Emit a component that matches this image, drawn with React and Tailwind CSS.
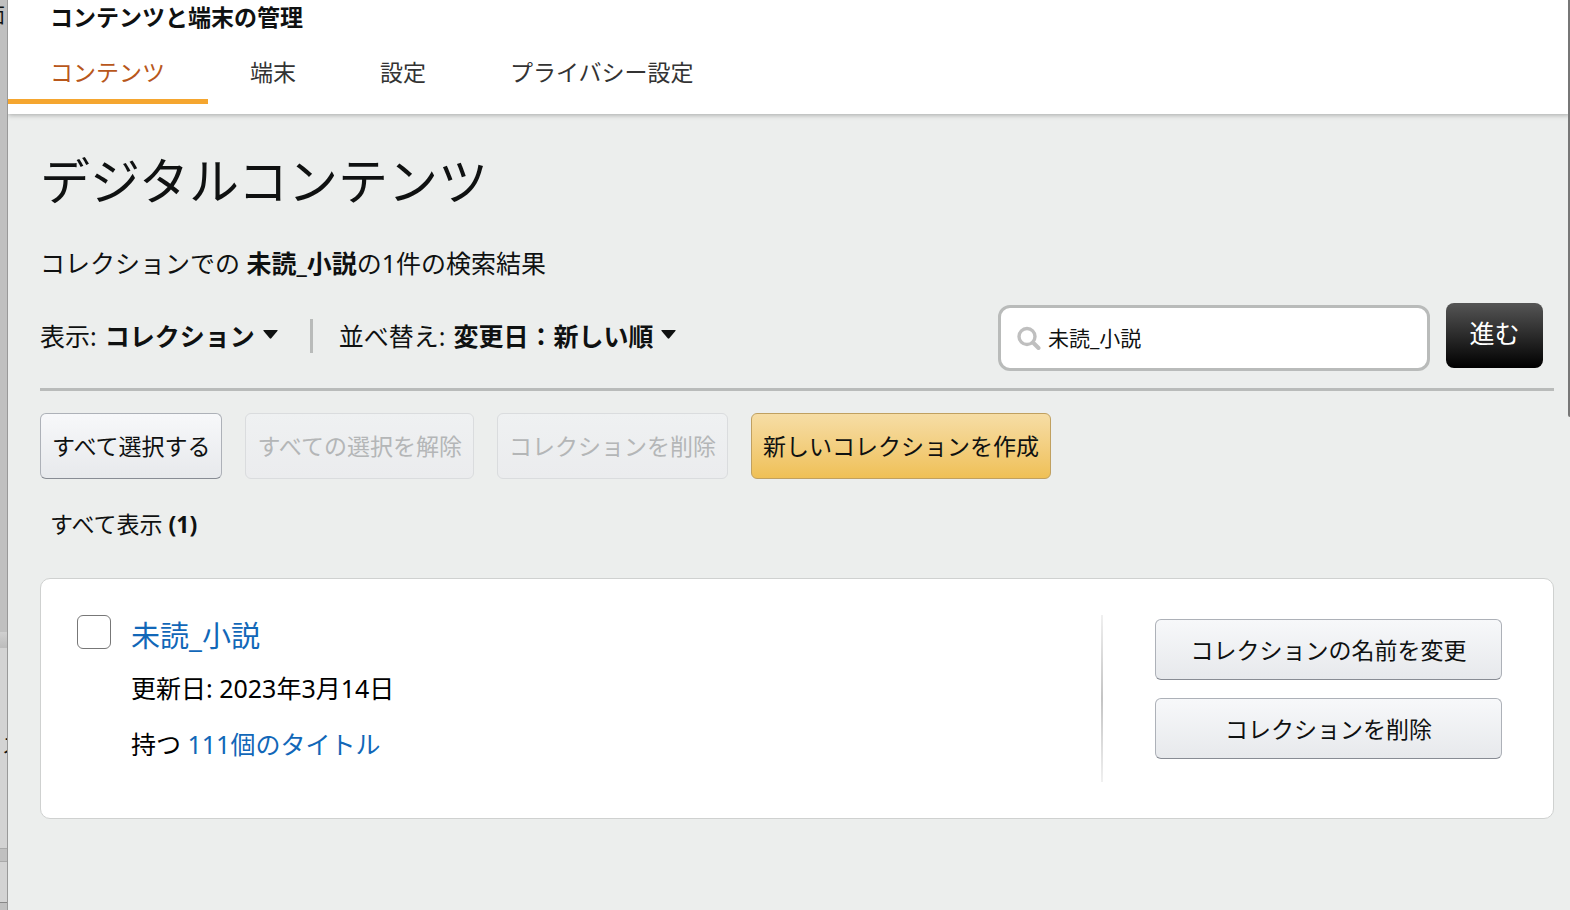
import React, { useState } from 'react';

const TABS = ['コンテンツ', '端末', '設定', 'プライバシー設定'];

const Caret = () => (
  <svg className="pointer-events-none h-[9px] w-[15px] flex-shrink-0" viewBox="0 0 15 9" aria-hidden="true">
    <path d="M1 0h13q1.2 0 .4 1L8.3 8.2q-.8.9-1.6 0L.6 1Q-.2 0 1 0z" fill="#0f1111" />
  </svg>
);

const SearchIcon = () => (
  <svg className="h-6 w-6 flex-shrink-0" viewBox="0 0 24 24" fill="none" stroke="#bfbfbf" aria-hidden="true">
    <circle cx="10" cy="10.5" r="8" strokeWidth="3.4" />
    <path d="M16.5 17l5 5" strokeWidth="4" strokeLinecap="round" />
  </svg>
);

const FilterSelect = ({ id, label, options }) => (
  <div className="flex items-center">
    <label htmlFor={id} className="mr-2">{label}</label>
    <select id={id} className="field-sizing-content appearance-none bg-transparent p-0 font-bold">
      {options.map((option) => (
        <option key={option}>{option}</option>
      ))}
    </select>
    <span className="ml-2 flex pb-[2px]">
      <Caret />
    </span>
  </div>
);

const GreyButton = ({ children, className = '', disabled = false }) => (
  <button
    className={`rounded-md border border-[#adb1b8] border-b-[#888c94] bg-linear-to-b from-[#f7f8fa] to-[#e7e9ec] text-[23px] leading-8 disabled:border-[#dadcde] disabled:from-[#eff1f2] disabled:to-[#ebecee] disabled:text-[#b4b6b7] ${className}`}
    disabled={disabled}
  >
    {children}
  </button>
);

// Slice of the page that sits behind the panel
const Backdrop = () => (
  <div className="relative flex w-2 flex-shrink-0 flex-col overflow-hidden border-r border-[#999] bg-[#c0c0c0] text-xl" aria-hidden="true">
    <div className="h-[632px]" />
    <div className="h-4 bg-linear-to-b from-[#d0d0d0] to-[#bcbcbc]" />
    <div className="h-[201px] border-b border-[#aaa] bg-[#d3d3d3]" />
    <div className="h-[13px] border-b border-[#aaa]" />
    <div className="h-[41px] border-b border-[#888] bg-[#d3d3d3]" />
    <span className="absolute top-0 right-[2px] leading-8">面</span>
    <span className="absolute top-[730px] left-[2px] leading-8">ス</span>
  </div>
);

const App = () => {
  const [query, setQuery] = useState('未読_小説');
  const [checked, setChecked] = useState(false);

  return (
    <div className="relative flex min-h-screen bg-[#eceeed] font-['Noto_Sans','Noto_Sans_CJK_JP',sans-serif] text-[#0f1111]" lang="ja">
      <Backdrop />

      <div className="min-w-0 flex-1">
        <header className="bg-white pb-[10px] shadow-[0_1px_5px_rgba(0,0,0,0.3)]">
          <h1 className="pt-px pl-[42px] text-[23px] leading-8 font-bold">コンテンツと端末の管理</h1>
          <nav className="flex text-[23px] leading-8 text-[#333]">
            {TABS.map((tab, i) => (
              <a
                key={tab}
                href="#"
                className={i === 0
                  ? 'border-b-5 border-[#f5a62f] pt-[23px] pr-[43px] pb-[11px] pl-[42px] text-[#b8571b]'
                  : 'border-b-5 border-transparent pt-[23px] pr-[42px] pb-[11px] pl-[42px]'}
              >
                {tab}
              </a>
            ))}
          </nav>
        </header>

        <main className="pr-4 pl-8">
          <h2 className="pt-8 text-[50px] leading-[70px]">デジタルコンテンツ</h2>
          <p className="mt-[29px] text-[25px] leading-9">
            コレクションでの <b>未読_小説</b>の1件の検索結果
          </p>

          <div className="mt-[22px] flex items-center justify-between border-b-3 border-[#b9bbba] pb-4">
            <div className="flex items-center pb-1 text-[25px] leading-9">
              <FilterSelect id="view" label="表示:" options={['コレクション']} />
              <div className="mr-[26px] ml-8 h-[34px] w-[3px] bg-[#b9bbba]" />
              <FilterSelect id="sort" label="並べ替え:" options={['変更日：新しい順']} />
            </div>
            <form className="mr-[11px] flex items-center gap-4" onSubmit={(e) => e.preventDefault()}>
              <label className="flex h-[66px] w-[432px] items-center gap-[7px] rounded-xl border-3 border-[#b9bbba] bg-white px-4">
                <SearchIcon />
                <input
                  aria-label="検索"
                  className="min-w-0 flex-1 text-[21px] leading-8 outline-none"
                  value={query}
                  onChange={(e) => setQuery(e.target.value)}
                />
              </label>
              <button className="mb-1 h-[65px] w-[97px] rounded-lg bg-linear-to-b/srgb from-[#555] to-black pb-1 text-[25px] text-white">
                進む
              </button>
            </form>
          </div>

          <div className="mt-[22px] flex gap-[23px]">
            <GreyButton className="h-[66px] px-[11px]">すべて選択する</GreyButton>
            <GreyButton className="h-[66px] px-[11px]" disabled>すべての選択を解除</GreyButton>
            <GreyButton className="h-[66px] px-[11px]" disabled>コレクションを削除</GreyButton>
            <button className="h-[66px] rounded-md border border-[#c0a060] bg-linear-to-b from-[#f6dda5] to-[#efc055] px-[11px] text-[23px] leading-8">
              新しいコレクションを作成
            </button>
          </div>

          <p className="mt-[29px] ml-[10px] text-[23px] leading-8">
            すべて表示 <b>(1)</b>
          </p>

          <section className="mt-[38px] flex min-h-[241px] rounded-[10px] border border-[#cfd1d0] bg-white pt-9 pr-[51px] pb-[35px] pl-9">
            <input
              id="row"
              type="checkbox"
              className="h-[34px] w-[34px] flex-shrink-0 appearance-none rounded-md border border-[#777] bg-white checked:bg-[#007185]"
              checked={checked}
              onChange={(e) => setChecked(e.target.checked)}
              aria-label="未読_小説"
            />
            <div className="ml-5 flex-1 text-[25px] leading-9 text-black">
              <a href="#" className="block text-[29px] leading-[42px] text-[#1167b8]">未読_小説</a>
              <p className="mt-[13px]">更新日: 2023年3月14日</p>
              <p className="mt-5">
                持つ <a href="#" className="text-[#1167b8]">111個のタイトル</a>
              </p>
            </div>
            <div className="h-[167px] w-[2px] bg-linear-to-b from-[#f0f0f0] via-[#c4c4c4] to-[#f0f0f0]" />
            <div className="ml-[52px] flex w-[347px] flex-col gap-[18px] pt-1">
              <GreyButton className="h-[61px]">コレクションの名前を変更</GreyButton>
              <GreyButton className="h-[61px]">コレクションを削除</GreyButton>
            </div>
          </section>
        </main>
      </div>

      {/* Scrollbar thumb */}
      <div className="absolute top-0 right-0 h-[417px] w-[2px] rounded-bl-sm bg-[#777]" />
    </div>
  );
};

export default App;
